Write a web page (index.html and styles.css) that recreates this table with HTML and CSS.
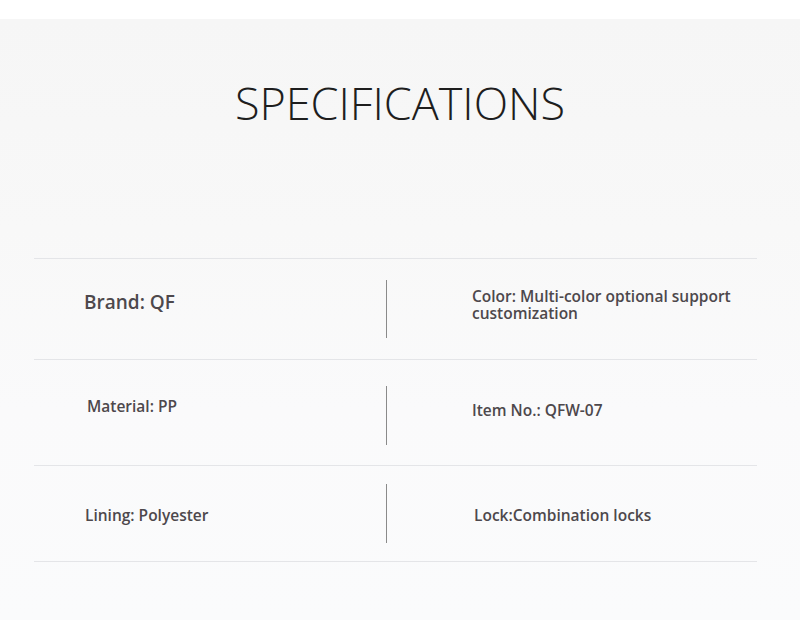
FILE: index.html
```html
<!DOCTYPE html>
<html>
<head>
<meta charset="utf-8">
<link rel="stylesheet" href="styles.css">
</head>
<body>
<div class="topbar"></div>
<main class="page">
  <h1 class="title">SPECIFICATIONS</h1>
  <div class="specs">
    <div class="row row-1">
      <div class="cell left"><span class="big">Brand: QF</span></div>
      <div class="divider"></div>
      <div class="cell right"><span class="wrap">Color: Multi-color optional support customization</span></div>
    </div>
    <div class="row row-2">
      <div class="cell left"><span>Material: PP</span></div>
      <div class="divider"></div>
      <div class="cell right"><span>Item No.: QFW-07</span></div>
    </div>
    <div class="row row-3">
      <div class="cell left"><span>Lining: Polyester</span></div>
      <div class="divider"></div>
      <div class="cell right"><span>Lock:Combination locks</span></div>
    </div>
  </div>
</main>
</body>
</html>
```
FILE: styles.css
```css
* { box-sizing: border-box; }
html, body { margin: 0; padding: 0; }
body {
  width: 800px;
  height: 620px;
  overflow: hidden;
  font-family: "Open Sans", "Noto Sans", sans-serif;
  background: #fbfbfb;
}
.topbar {
  height: 19px;
  background: #ffffff;
}
.page {
  height: 601px;
  background: linear-gradient(180deg, #f6f6f6 0%, #f8f8f8 35%, #fafafb 65%, #fafbfc 100%);
  padding-top: 53px;
}
.title {
  margin: 0;
  text-align: center;
  font-weight: 300;
  font-size: 45px;
  line-height: 62px;
  color: #1e1e1e;
}
.specs {
  margin: 124px 0 0 34px;
  width: 723px;
  border-top: 1px solid #e4e5e8;
}
.row {
  display: flex;
  align-items: center;
  border-bottom: 1px solid #e4e5e8;
}
.row-1 { height: 101px; }
.row-2 { height: 106px; }
.row-3 { height: 96px; }
.cell {
  display: flex;
  align-items: center;
  font-weight: 600;
  font-size: 15.5px;
  line-height: 17px;
  color: #4d484c;
}
.left { width: 352px; }
.right { flex: 1; }
.divider {
  width: 1px;
  height: 58px;
  background: #8a8a8a;
}
.big { font-size: 19px; }
.row-1 .left { padding: 0 0 14px 50px; }
.row-1 .right { padding: 0 10px 8px 85px; }
.row-2 .left { padding: 0 0 12px 53px; }
.row-2 .right { padding: 0 0 4px 85px; }
.row-3 .left { padding: 4px 0 0 51px; }
.row-3 .right { padding: 4px 0 0 87px; }
.row-2 .divider { height: 59px; margin-top: 6px; }
.row-3 .divider { height: 59px; }
```
